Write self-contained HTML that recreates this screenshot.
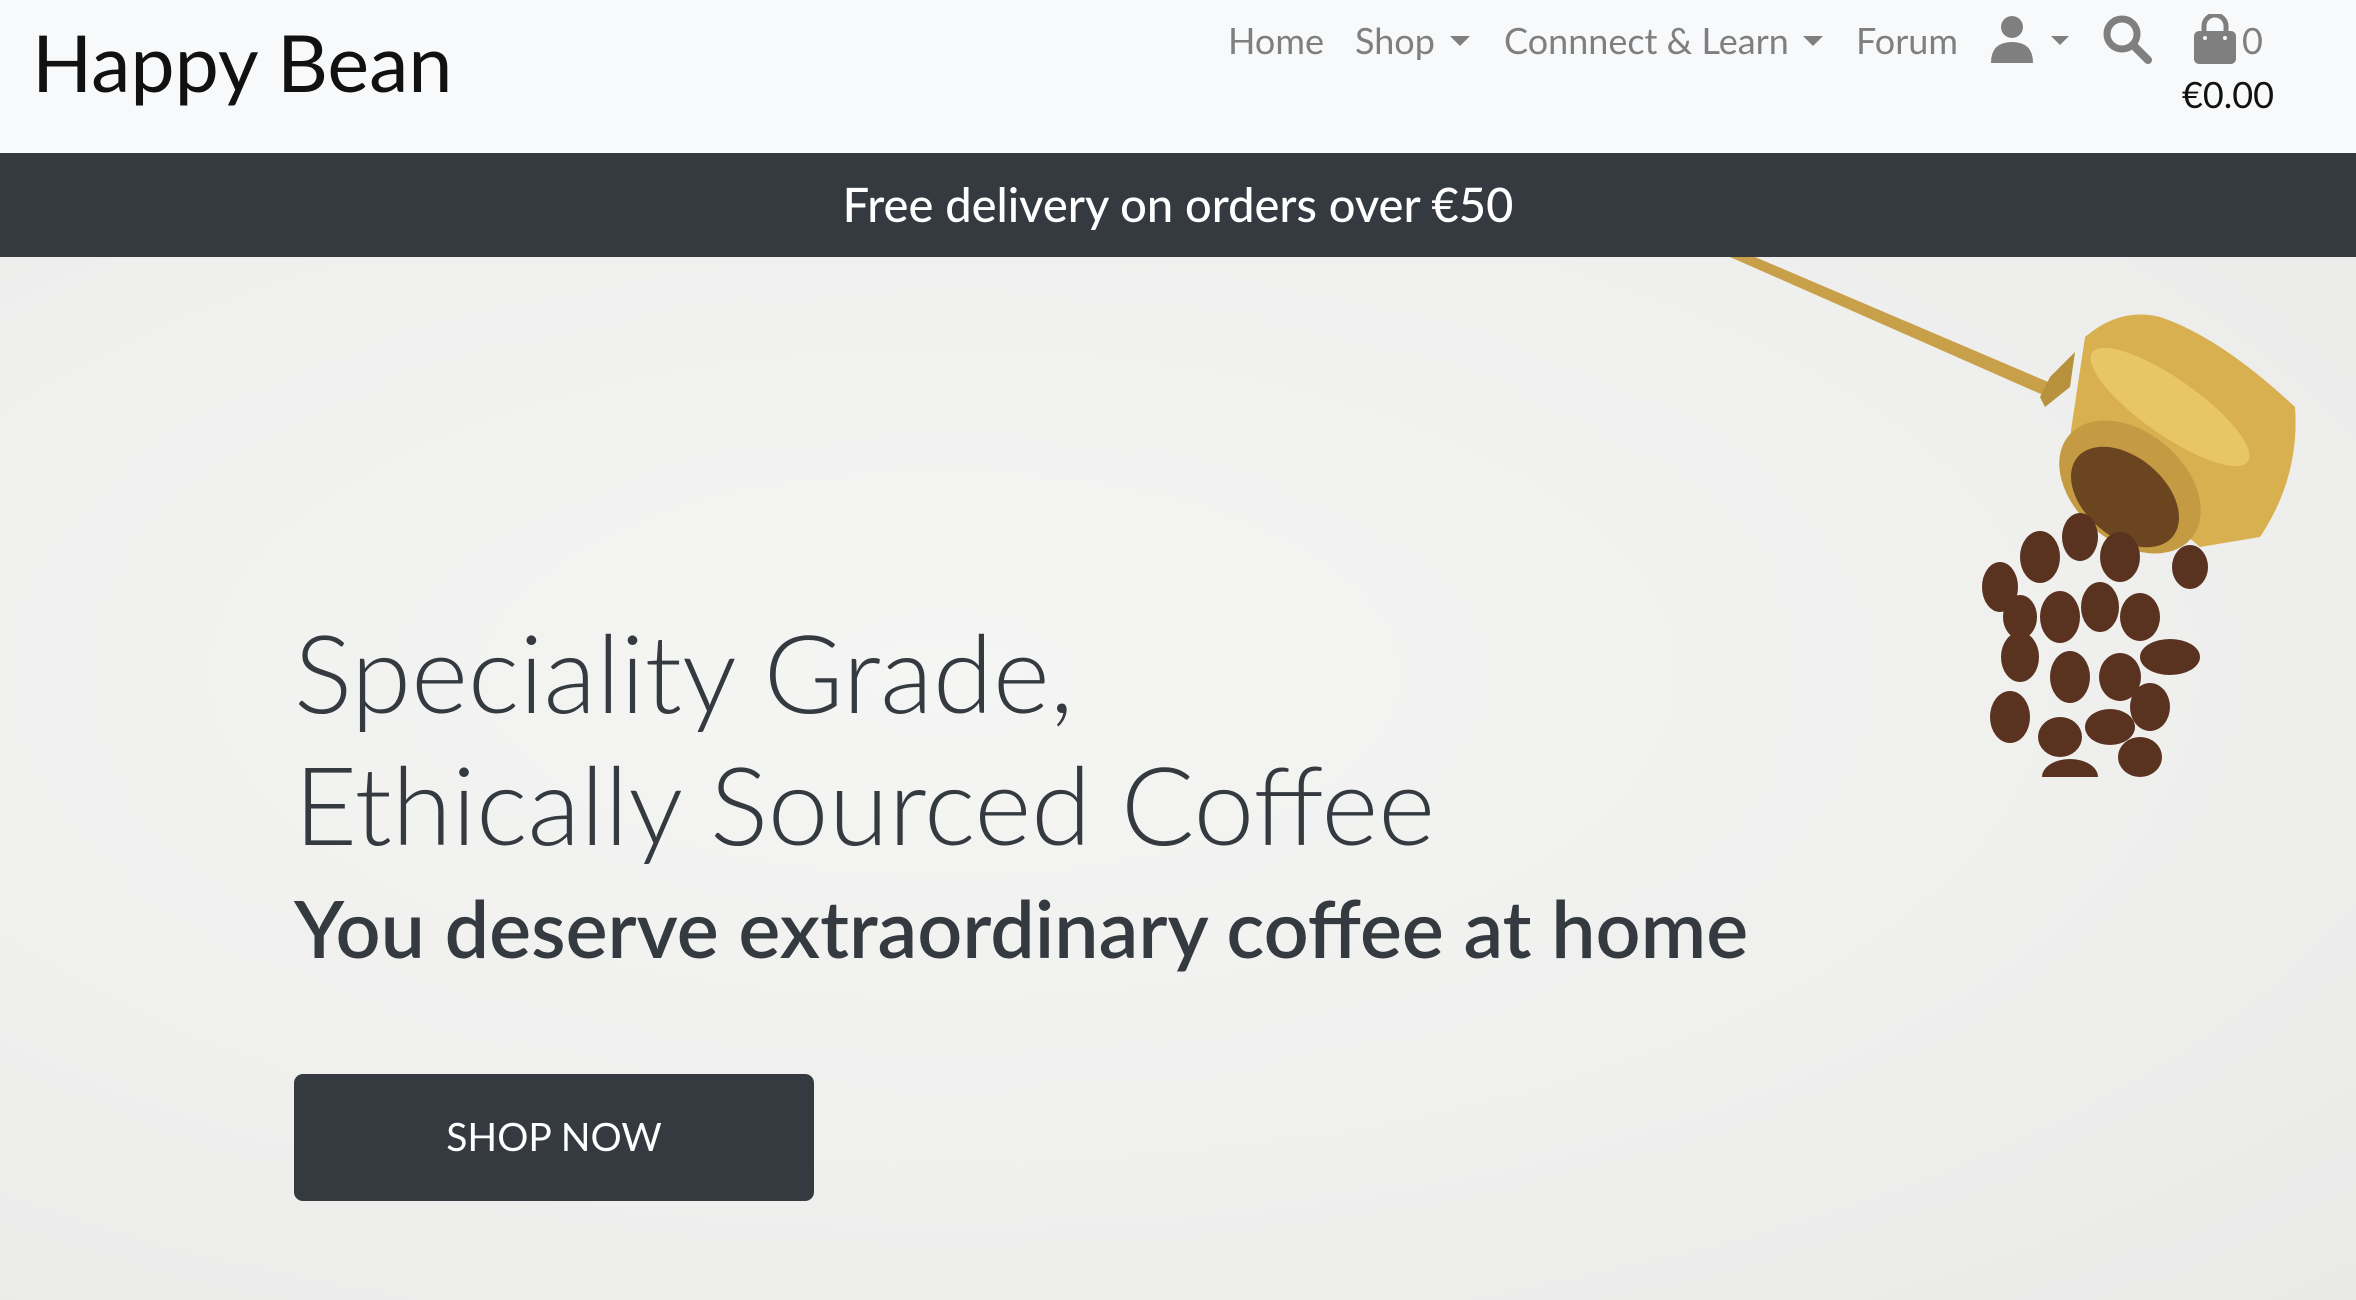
<!DOCTYPE html>
<html><head><meta charset="utf-8"><style>
*{margin:0;padding:0;box-sizing:border-box}
body{width:2356px;height:1300px;overflow:hidden;font-family:"Lato","Liberation Sans",sans-serif;background:#f8f9fa;position:relative}
.t{position:absolute;white-space:nowrap}
header{position:absolute;left:0;top:0;width:2356px;height:153px;background:#f8f9fa}
.nav{color:#7f7f7f;font-size:36px;top:18px}
.caret{position:absolute;width:0;height:0;border-left:10px solid transparent;border-right:10px solid transparent;border-top:10px solid #7f7f7f}
.banner{position:absolute;left:0;top:153px;width:2356px;height:104px;background:#343a40;color:#fff;font-size:47px;font-weight:500;text-align:center;line-height:104px}
.hero{position:absolute;left:0;top:257px;width:2356px;height:1043px;background:radial-gradient(ellipse at 40% 40%,#f5f5f4 0%,#efefee 60%,#e9e9e8 100%)}
.btn{position:absolute;left:294px;top:1074px;width:520px;height:127px;background:#343a40;border-radius:9px;color:#fff;font-size:39px;text-align:center;line-height:127px}
</style></head><body>
<header>
<div class="t" style="left:32px;top:14px;font-size:79px;color:#111">Happy Bean</div>
<div class="t nav" style="left:1228px">Home</div>
<div class="t nav" style="left:1355px">Shop</div><div class="caret" style="left:1450px;top:36px"></div>
<div class="t nav" style="left:1504px">Connnect &amp; Learn</div><div class="caret" style="left:1803px;top:36px"></div>
<div class="t nav" style="left:1856px">Forum</div>
<svg style="position:absolute;left:1988px;top:14px" width="90" height="52" viewBox="0 0 90 52"><circle cx="24" cy="13" r="11" fill="#7f7f7f"/><path d="M3 49 Q3 28 24 28 Q45 28 45 49 Z" fill="#7f7f7f"/><path d="M63 22 L81 22 L72 31Z" fill="#7f7f7f"/></svg>
<svg style="position:absolute;left:2102px;top:14px" width="52" height="52" viewBox="0 0 52 52"><circle cx="20" cy="20" r="15" fill="none" stroke="#7f7f7f" stroke-width="7"/><path d="M31 31 L46 46" stroke="#7f7f7f" stroke-width="8" stroke-linecap="round"/></svg>
<svg style="position:absolute;left:2192px;top:14px" width="46" height="52" viewBox="0 0 46 52"><path d="M12 18 V12 A10 10 0 0 1 34 12 V18" fill="none" stroke="#7f7f7f" stroke-width="5"/><rect x="2" y="17" width="42" height="33" rx="5" fill="#7f7f7f"/><circle cx="13" cy="24" r="2" fill="#f8f9fa"/><circle cx="33" cy="24" r="2" fill="#f8f9fa"/></svg>
<div class="t" style="left:2242px;top:18px;font-size:36px;color:#7f7f7f">0</div>
<div class="t" style="left:2182px;top:72px;font-size:36px;color:#111">€0.00</div>
</header>
<div class="banner">Free delivery on orders over €50</div>
<div class="hero">
<svg style="position:absolute;left:1700px;top:0" width="600" height="520" viewBox="0 0 600 520">
<path d="M30 0 L55 0 L360 130 L352 142 Z" fill="#c9a04a"/>
<path d="M375 95 L350 120 L340 140 L345 150 L370 130 Z" fill="#b8913c"/>
<path d="M385 80 Q420 50 460 60 Q520 80 595 150 Q600 220 560 280 L500 290 L370 180 Z" fill="#d8b050"/>
<ellipse cx="470" cy="150" rx="28" ry="95" transform="rotate(-55 470 150)" fill="#f0d070" opacity=".7"/>
<ellipse cx="430" cy="230" rx="55" ry="80" transform="rotate(-50 430 230)" fill="#c49a42"/>
<ellipse cx="425" cy="240" rx="40" ry="62" transform="rotate(-50 425 240)" fill="#6b4520"/>
<g fill="#5a3220">
<ellipse cx="300" cy="330" rx="18" ry="25"/><ellipse cx="340" cy="300" rx="20" ry="26"/><ellipse cx="380" cy="280" rx="18" ry="24"/><ellipse cx="420" cy="300" rx="20" ry="25"/><ellipse cx="360" cy="360" rx="20" ry="26"/><ellipse cx="400" cy="350" rx="19" ry="25"/><ellipse cx="440" cy="360" rx="20" ry="24"/><ellipse cx="320" cy="400" rx="19" ry="25"/><ellipse cx="370" cy="420" rx="20" ry="26"/><ellipse cx="420" cy="420" rx="21" ry="24"/><ellipse cx="470" cy="400" rx="30" ry="18"/><ellipse cx="310" cy="460" rx="20" ry="26"/><ellipse cx="360" cy="480" rx="22" ry="20"/><ellipse cx="410" cy="470" rx="25" ry="18"/><ellipse cx="450" cy="450" rx="20" ry="24"/><ellipse cx="370" cy="520" rx="28" ry="18"/><ellipse cx="440" cy="500" rx="22" ry="20"/><ellipse cx="490" cy="310" rx="18" ry="22"/><ellipse cx="320" cy="360" rx="17" ry="22"/>
</g></svg>
<div class="t" style="left:294px;top:349px;font-size:109px;font-weight:300;color:#343a40">Speciality Grade,</div>
<div class="t" style="left:294px;top:481px;font-size:109px;font-weight:300;color:#343a40">Ethically Sourced Coffee</div>
<div class="t" style="left:294px;top:623px;font-size:79px;font-weight:600;color:#343a40">You deserve extraordinary coffee at home</div>
</div>
<div class="btn">SHOP NOW</div>
</body></html>
